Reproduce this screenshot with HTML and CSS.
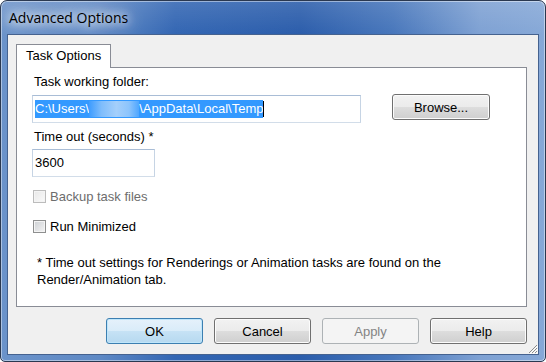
FILE: index.html
```html
<!DOCTYPE html>
<html lang="en">
<head>
  <meta charset="UTF-8" />
  <title>Advanced Options</title>
  <link rel="stylesheet" href="styles.css">
</head>
<body>
  <div class="window">
    <div class="titlebar">
      <span class="title">Advanced Options</span>
    </div>
    <div class="client">
      <div class="tabs">
        <div class="tab">Task Options</div>
      </div>
      <div class="panel">
        <div class="label first">Task working folder:</div>
        <div class="folder-row">
          <div class="textbox wide"><span class="sel">C:\Users\<span class="blur"></span>\AppData\Local\Temp</span><span class="caret"></span></div>
          <button class="btn browse">Browse...</button>
        </div>
        <div class="label">Time out (seconds) *</div>
        <div class="textbox narrow">3600</div>
        <div class="check disabled"><span class="box"></span>Backup task files</div>
        <div class="check minimized"><span class="box"></span>Run Minimized</div>
        <p class="note">* Time out settings for Renderings or Animation tasks are found on the<br>Render/Animation tab.</p>
      </div>
      <div class="buttons">
        <button class="btn default">OK</button>
        <button class="btn">Cancel</button>
        <button class="btn" disabled>Apply</button>
        <button class="btn">Help</button>
      </div>
      <svg class="grip" width="12" height="12" viewBox="0 0 12 12">
        <path d="M11 3 L3 11 M11 6 L6 11 M11 9 L9 11" stroke="#8c8c8c" stroke-width="1" />
        <path d="M12 4 L4 12 M12 7 L7 12 M12 10 L10 12" stroke="#ffffff" stroke-width="1" />
      </svg>
    </div>
  </div>
</body>
</html>
```

FILE: styles.css
```css
body {
  margin: 0;
  font-family: "Liberation Sans", Arial, sans-serif;
  font-size: 13px;
  color: #000;
}
.window {
  width: 546px;
  height: 362px;
  box-sizing: border-box;
  border: 1px solid #2a3850;
  border-radius: 7px 7px 5px 5px;
  padding: 0 6px 6px 6px;
  display: flex;
  flex-direction: column;
  background:
    linear-gradient(180deg, rgba(255,255,255,0.12), rgba(255,255,255,0) 34px),
    linear-gradient(90deg, #6b93ca 0%, #5e89c5 18%, #3366b3 32%, #2b5dab 55%, #4776bb 72%, #7ea1d3 88%, #86a8d7 100%);
  box-shadow: inset 0 0 0 1px rgba(255,255,255,0.45);
}
.titlebar {
  height: 33px;
  display: flex;
  align-items: center;
}
.title {
  margin-left: 2px;
  font-family: "Open Sans", "Noto Sans", sans-serif;
  font-size: 14px;
  color: #000;
  text-shadow: 0 0 8px #fff, 0 0 14px #fff, 0 0 20px rgba(255,255,255,0.9);
}
.client {
  flex: 1;
  position: relative;
  background: #f0f0f0;
  border: 1px solid #45628f;
  display: flex;
  flex-direction: column;
  padding: 9px 11px 10px 8px;
}
.tabs {
  display: flex;
}
.tab {
  height: 24px;
  box-sizing: border-box;
  padding: 3px 9px 0 9px;
  border: 1px solid #898c95;
  border-bottom: none;
  background: #fff;
  margin-bottom: -1px;
  position: relative;
  z-index: 1;
}
.panel {
  height: 240px;
  box-sizing: border-box;
  border: 1px solid #898c95;
  background: #fff;
  padding: 6px 0 0 15px;
}
.label {
  margin: 6px 0 0 2px;
  line-height: 16px;
}
.label.first {
  margin-top: 0;
}
.folder-row {
  display: flex;
  align-items: flex-start;
  margin-top: 5px;
}
.textbox {
  height: 28px;
  box-sizing: border-box;
  border: 1px solid;
  border-color: #a9bdd6 #c6d4e4 #d2dde9 #c6d4e4;
  display: flex;
  align-items: center;
  padding-left: 2px;
  line-height: 16px;
}
.textbox.wide {
  width: 329px;
}
.textbox.narrow {
  width: 123px;
  margin-top: 4px;
}
.sel {
  background: #3399ff;
  color: #fff;
  padding: 1px 0;
}
.blur {
  display: inline-block;
  width: 50px;
  height: 16px;
  vertical-align: -4px;
  background: linear-gradient(90deg, #3d9cff, #7fbdfc 25%, #a4cffb 55%, #8cc4fc 80%, #4ea6ff);
}
.caret {
  display: inline-block;
  width: 1px;
  height: 16px;
  background: #000;
}
.btn {
  width: 97px;
  height: 26px;
  font-family: "Liberation Sans", Arial, sans-serif;
  font-size: 13px;
  color: #000;
  border: 1px solid #707070;
  border-radius: 3px;
  background: linear-gradient(180deg, #f2f2f2 0%, #ebebeb 50%, #dddddd 51%, #cfcfcf 100%);
  box-shadow: inset 0 0 0 1px #fcfcfc;
  padding: 0;
}
.btn.browse {
  margin-left: 31px;
  margin-top: -1px;
  width: 98px;
}
.btn.default {
  border-color: #3c7fb1;
  background: linear-gradient(180deg, #e5f1fb 0%, #d9ecf9 50%, #c6e2f5 51%, #b6d9f0 100%);
  box-shadow: inset 0 0 0 1px #bfe6fb;
}
.btn:disabled {
  color: #838383;
  border-color: #adb2b5;
  background: #f4f4f4;
  box-shadow: none;
}
.check {
  display: flex;
  align-items: center;
  height: 16px;
  margin-top: 11px;
}
.check.minimized {
  margin-top: 14px;
}
.box {
  width: 13px;
  height: 13px;
  box-sizing: border-box;
  margin: 0 4px 0 1px;
  border: 1px solid #8e8f8f;
  background: linear-gradient(135deg, #cdd0d4, #f4f4f4);
  box-shadow: inset 0 0 0 1px #f4f4f4;
}
.check.disabled {
  color: #6d6d6d;
}
.check.disabled .box {
  border-color: #bcbcbc;
  background: linear-gradient(135deg, #e8e8e8, #fafafa);
}
.note {
  margin: 20px 0 0 5px;
  line-height: 17px;
}
.buttons {
  margin-top: auto;
  display: flex;
  justify-content: flex-end;
  gap: 11px;
}
.grip {
  position: absolute;
  right: 0;
  bottom: 0;
}
```
